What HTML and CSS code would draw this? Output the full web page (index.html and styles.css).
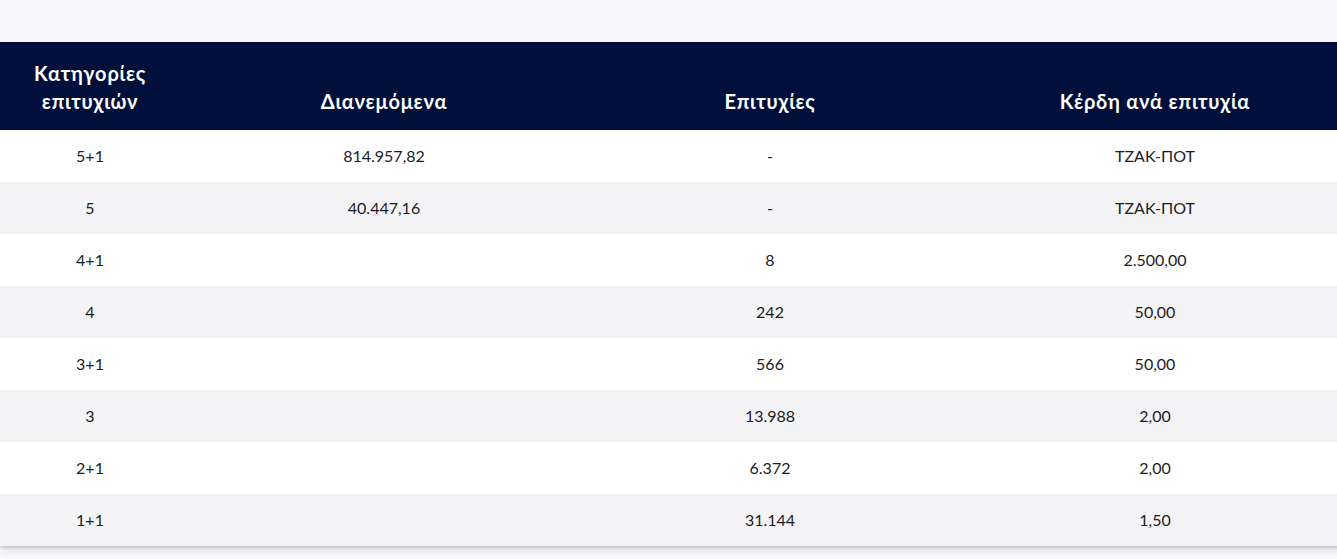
FILE: index.html
```html
<!DOCTYPE html>
<html lang="el">
<head>
<meta charset="utf-8">
<title>Κατηγορίες επιτυχιών</title>
<link rel="stylesheet" href="styles.css">
</head>
<body>
<div class="page">
  <div class="table-wrap">
    <table class="results">
      <colgroup>
        <col class="c1"><col class="c2"><col class="c3"><col class="c4">
      </colgroup>
      <thead>
        <tr>
          <th>Κατηγορίες<br>επιτυχιών</th>
          <th>Διανεμόμενα</th>
          <th>Επιτυχίες</th>
          <th>Κέρδη ανά επιτυχία</th>
        </tr>
      </thead>
      <tbody>
        <tr><td>5+1</td><td>814.957,82</td><td>-</td><td>ΤΖΑΚ-ΠΟΤ</td></tr>
        <tr><td>5</td><td>40.447,16</td><td>-</td><td>ΤΖΑΚ-ΠΟΤ</td></tr>
        <tr><td>4+1</td><td></td><td>8</td><td>2.500,00</td></tr>
        <tr><td>4</td><td></td><td>242</td><td>50,00</td></tr>
        <tr><td>3+1</td><td></td><td>566</td><td>50,00</td></tr>
        <tr><td>3</td><td></td><td>13.988</td><td>2,00</td></tr>
        <tr><td>2+1</td><td></td><td>6.372</td><td>2,00</td></tr>
        <tr><td>1+1</td><td></td><td>31.144</td><td>1,50</td></tr>
      </tbody>
    </table>
  </div>
</div>
</body>
</html>
```

FILE: styles.css
```css
html, body {
  margin: 0;
  padding: 0;
  overflow: hidden;
}
body {
  background: #f9f9fb;
  font-family: Lato, "Open Sans", "Noto Sans", sans-serif;
  color: #1c1c24;
}
.page {
  padding-top: 42px;
  padding-bottom: 20px;
}
.table-wrap {
  width: 1358px;
  box-shadow: 0 2px 2px rgba(0, 0, 0, 0.12), 0 5px 9px rgba(0, 0, 0, 0.09);
}
.results {
  width: 1358px;
  table-layout: fixed;
  border-collapse: collapse;
}
.c1 { width: 180px; }
.c2 { width: 408px; }
.c3 { width: 364px; }
.c4 { width: 406px; }
.results thead tr {
  background: #01103a;
}
.results th {
  height: 88px;
  box-sizing: border-box;
  padding: 0 0 15px;
  vertical-align: bottom;
  text-align: center;
  color: #ffffff;
  font-size: 20px;
  font-weight: 700;
  letter-spacing: 0.8px;
  line-height: 28px;
}
.results td {
  height: 52px;
  padding: 0;
  text-align: center;
  vertical-align: middle;
  font-size: 16px;
  line-height: 20px;
}
.results tbody tr:nth-child(odd) { background: #ffffff; }
.results tbody tr:nth-child(even) { background: #f4f4f6; }
```
